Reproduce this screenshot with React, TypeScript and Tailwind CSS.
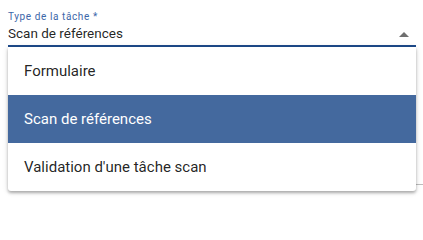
import React from "react";

export default function App() {
  const items = ["Formulaire", "Scan de références", "Validation d'une tâche scan"];
  const selected = 1;
  return (
    <div
      className="relative w-[423px] h-[200px] overflow-hidden bg-white text-[rgba(0,0,0,0.87)]"
      style={{ fontFamily: "Roboto, 'Liberation Sans', sans-serif" }}
    >
      <div className="ml-[8px] w-[408px] pt-[12px]">
        <div className="text-[10px] leading-[10px] tracking-[0.6px] text-[#3d67a9]">
          Type de la tâche *
        </div>
        <div className="flex items-center justify-between">
          <span className="text-[13.5px] leading-[22px]">Scan de références</span>
          <svg width="10" height="5" viewBox="0 0 10 5" className="mr-[7px] mt-[3px]">
            <path d="M0 5 L5 0 L10 5 Z" fill="#6f6f6f" />
          </svg>
        </div>
        <div className="mt-[1px] h-[2px] bg-[#1e4b8b]" />
      </div>
      <div className="ml-[8px] mt-[137px] h-[1px] bg-[#bdbdbd]" />

      <div className="absolute left-[8px] top-[47px] w-[408px] bg-white rounded-b-[3px] shadow-[0_2px_3px_rgba(0,0,0,0.28),0_1px_6px_rgba(0,0,0,0.12)]">
        {items.map((it, i) => (
          <div
            key={it}
            className={
              i === selected
                ? "h-[48px] flex items-center px-[16px] text-[15px] bg-[#44699e] text-white"
                : "h-[48px] flex items-center px-[16px] text-[15px]"
            }
          >
            {it}
          </div>
        ))}
      </div>
    </div>
  );
}
